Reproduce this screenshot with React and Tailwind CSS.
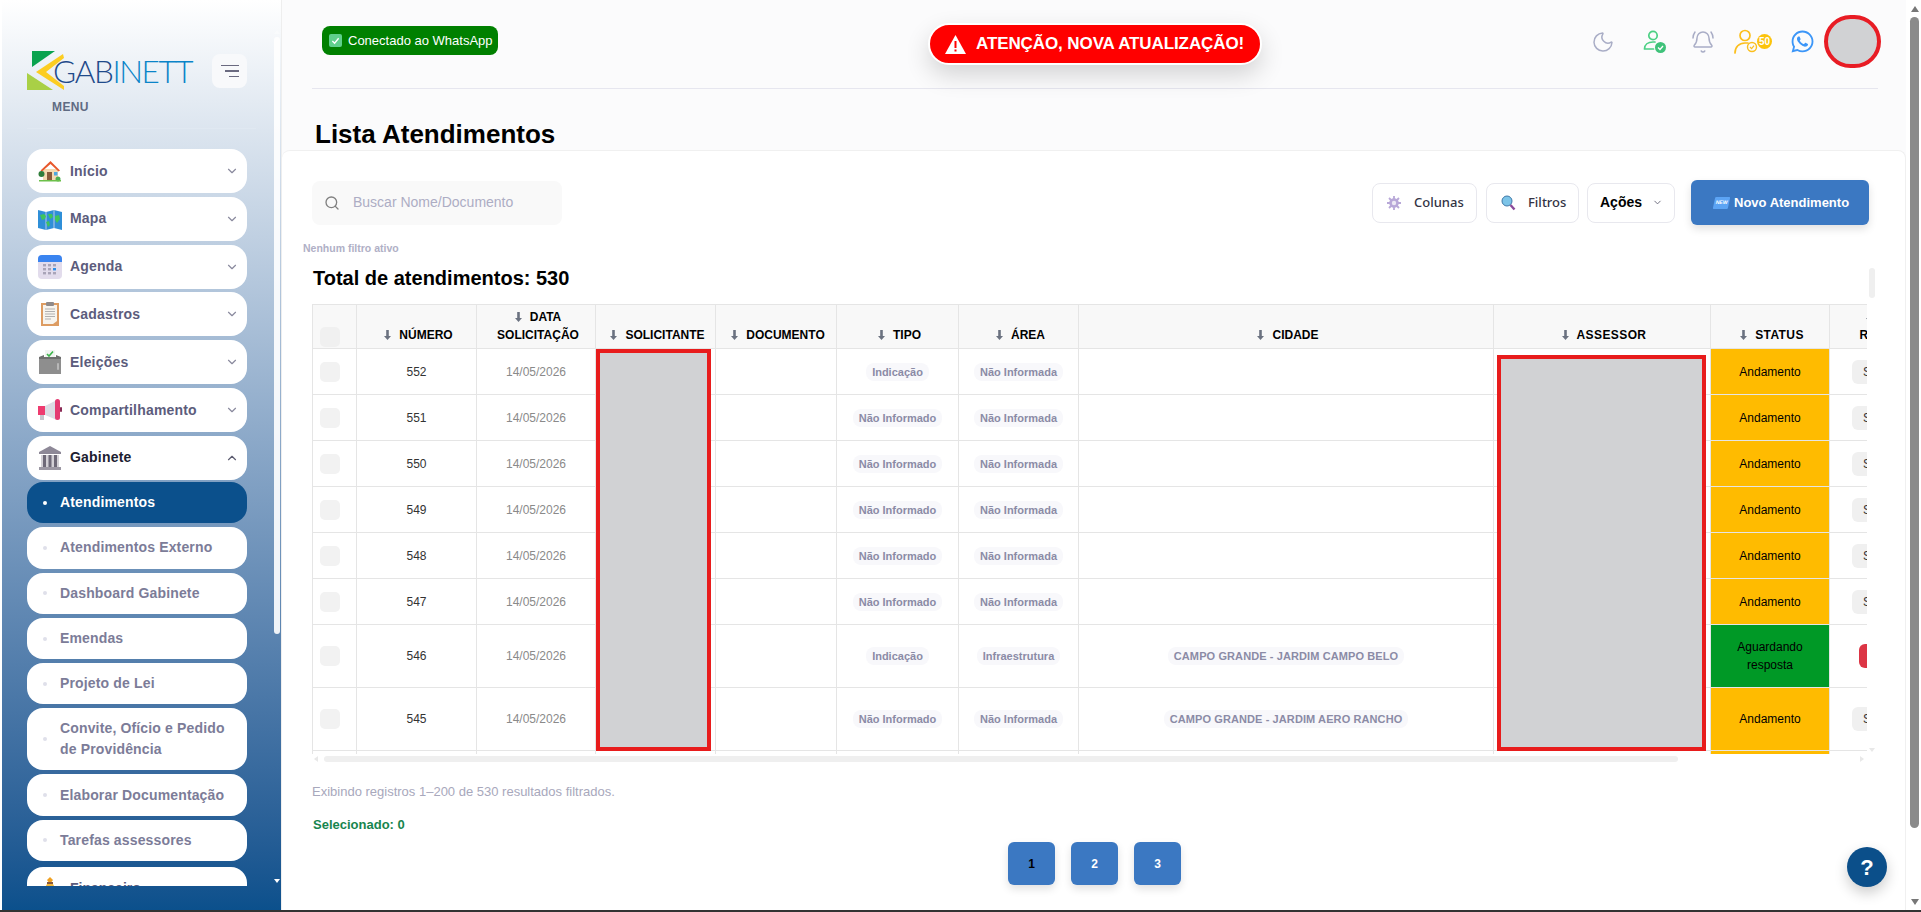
import { BellRing, ChevronDown, ChevronUp, Moon, Search } from "lucide-react";
import { FaWhatsapp } from "react-icons/fa";

const HouseIcon = () => (
  <svg width="24" height="24" viewBox="0 0 24 24">
    <rect x="5" y="10" width="15" height="11" fill="#f4d9b0" />
    <path d="M2.5 11.5 12.5 2l9.5 9.5-1.5 1-8-7.5-8.5 7.5z" fill="#e8582c" />
    <rect x="9" y="13" width="5" height="8" fill="#8a5a3a" />
    <rect x="16" y="13" width="3.5" height="3.5" fill="#4fa8e0" />
    <circle cx="3.5" cy="15" r="3" fill="#2f7d3a" />
    <circle cx="20" cy="20" r="2.5" fill="#4caf50" />
    <rect x="1" y="21" width="22" height="1.5" fill="#6cc04a" />
  </svg>
);
const MapIcon = () => (
  <svg width="24" height="24" viewBox="0 0 24 24">
    <path d="M0 3l8 2 8-2 8 2v18l-8-2-8 2-8-2z" fill="#2f8fd8" />
    <path d="M8 5v18M16 3v18" stroke="#b9c9e8" strokeWidth="1" />
    <path d="M2 8l4-1 2 2-1 3-3 1zM10 7l4 0 1 3-3 2zM17 9l4-1 1 4-3 4-2-3zM8 15l3-1 1 4-2 2z" fill="#3fc45c" />
  </svg>
);
const CalendarIcon = () => (
  <svg width="24" height="24" viewBox="0 0 24 24">
    <rect x="0" y="0" width="24" height="24" rx="4" fill="#e2dcec" />
    <path d="M0 7V4a4 4 0 0 1 4-4h16a4 4 0 0 1 4 4v3z" fill="#3a84f0" />
    <g fill="#a9a4b8">
      <rect x="5" y="9" width="3" height="2.4" />
      <rect x="10" y="9" width="3" height="2.4" />
      <rect x="15" y="9" width="3" height="2.4" />
      <rect x="5" y="13" width="3" height="2.4" />
      <rect x="10" y="13" width="3" height="2.4" />
      <rect x="5" y="17" width="3" height="2.4" />
      <rect x="10" y="17" width="3" height="2.4" />
      <rect x="15" y="17" width="3" height="2.4" />
    </g>
    <rect x="15" y="13" width="3" height="2.4" fill="#2f8fe8" />
  </svg>
);
const ClipboardIcon = () => (
  <svg width="24" height="24" viewBox="0 0 24 24">
    <rect x="3" y="1" width="18" height="23" fill="#dd9c62" />
    <path d="M5 3h14v16l-4 3H5z" fill="#f7f4ee" />
    <rect x="8" y="0" width="8" height="4" rx="1" fill="#8f8a8a" />
    <path d="M7 7h10M7 9.5h10M7 12h10M7 14.5h10M7 17h6" stroke="#a8a8a8" strokeWidth="0.9" />
  </svg>
);
const BallotIcon = () => (
  <svg width="24" height="24" viewBox="0 0 24 24">
    <rect x="7" y="0" width="10" height="8" fill="#f2f4f2" />
    <path d="M9 4l2 2 4-4.5" stroke="#3cb54a" strokeWidth="1.6" fill="none" />
    <path d="M1 7l5-2v2h12V5l5 2v2H1z" fill="#6e6e6e" />
    <rect x="1" y="9" width="22" height="15" fill="#8e8e8e" />
    <rect x="19" y="13" width="2" height="7" rx="1" fill="#b8b8b8" />
  </svg>
);
const MegaphoneIcon = () => (
  <svg width="24" height="24" viewBox="0 0 24 24">
    <rect x="2" y="15" width="4" height="7" fill="#c9c4cc" />
    <rect x="0" y="8" width="7" height="9" fill="#ee3b6f" />
    <path d="M7 8l12-6v20L7 17z" fill="#dcdce4" />
    <rect x="17" y="1" width="5" height="21" rx="2.5" fill="#e43a72" />
    <rect x="22" y="9" width="2" height="5" rx="1" fill="#8a2a55" />
  </svg>
);
const BankIcon = () => (
  <svg width="24" height="24" viewBox="0 0 24 24">
    <path d="M12 0 23 6v2H1V6z" fill="#8d8897" />
    <rect x="3" y="9" width="18" height="12" fill="#d3d0d6" />
    <path d="M5 9h3v12H5zM10.5 9h3v12h-3zM16 9h3v12h-3z" fill="#6e6978" />
    <rect x="1" y="21" width="22" height="3" fill="#9c98a4" />
  </svg>
);
const MoneyIcon = () => (
  <svg width="24" height="24" viewBox="0 0 24 24">
    <path d="M12 0l3 3-1.5 2h-3L9 3z" fill="#f0a020" />
    <rect x="9" y="5" width="6" height="2" fill="#8a5a3a" />
    <path d="M9 7h6l5 9v6H4v-6z" fill="#f5b73a" />
  </svg>
);
const SortArrow = () => (
  <svg width="7" height="10" viewBox="0 0 7 10" className="mr-[8px] inline-block align-[-1px]">
    <path d="M2.2 0h2.6v6H7L3.5 10 0 6h2.2z" fill="#6b7280" />
  </svg>
);

const mainMenu = [
  { label: "Início", icon: <HouseIcon /> },
  { label: "Mapa", icon: <MapIcon /> },
  { label: "Agenda", icon: <CalendarIcon /> },
  { label: "Cadastros", icon: <ClipboardIcon /> },
  { label: "Eleições", icon: <BallotIcon /> },
  { label: "Compartilhamento", icon: <MegaphoneIcon /> },
];

const subMenu = [
  "Atendimentos Externo",
  "Dashboard Gabinete",
  "Emendas",
  "Projeto de Lei",
  "Convite, Ofício e Pedido de Providência",
  "Elaborar Documentação",
  "Tarefas assessores",
];

const columns = [
  { title: "NÚMERO", width: "w-[120px]" },
  { title: "DATA SOLICITAÇÃO", width: "w-[119px]" },
  { title: "SOLICITANTE", width: "w-[120px]" },
  { title: "DOCUMENTO", width: "w-[121px]" },
  { title: "TIPO", width: "w-[122px]" },
  { title: "ÁREA", width: "w-[120px]" },
  { title: "CIDADE", width: "w-[415px]" },
  { title: "ASSESSOR", width: "w-[217px]", wide: true },
  { title: "STATUS", width: "w-[119px]", wide: true },
  { title: "DATA RETORNO", width: "w-[120px]", narrow: true },
];

const rows = [
  { num: 552, tipo: "Indicação", area: "Não Informada", cidade: "", status: "Andamento" },
  { num: 551, tipo: "Não Informado", area: "Não Informada", cidade: "", status: "Andamento" },
  { num: 550, tipo: "Não Informado", area: "Não Informada", cidade: "", status: "Andamento" },
  { num: 549, tipo: "Não Informado", area: "Não Informada", cidade: "", status: "Andamento" },
  { num: 548, tipo: "Não Informado", area: "Não Informada", cidade: "", status: "Andamento" },
  { num: 547, tipo: "Não Informado", area: "Não Informada", cidade: "", status: "Andamento" },
  { num: 546, tipo: "Indicação", area: "Infraestrutura", cidade: "CAMPO GRANDE - JARDIM CAMPO BELO", status: "Aguardando resposta", tall: true, late: true },
  { num: 545, tipo: "Não Informado", area: "Não Informada", cidade: "CAMPO GRANDE - JARDIM AERO RANCHO", status: "Andamento", tall: true },
  { num: 544, tipo: "Não Informado", area: "Não Informada", cidade: "", status: "Andamento" },
];

function Chip({ text, wide }) {
  return (
    <span className={`inline-block rounded-lg bg-[#f8f8fb] px-[6px] py-[2px] text-[11px] leading-[14px] font-bold text-[#8b8ba6] ${wide ? "tracking-[0.1px]" : ""}`}>
      {text}
    </span>
  );
}

function Sidebar() {
  return (
    <aside className="relative ml-[2px] h-full w-[279px] shrink-0 overflow-hidden bg-linear-to-b from-white to-[#0b508c]">
      <div className="flex h-[100px] items-start pl-[25px] pt-[51px]">
        <div className="relative flex h-[40px] w-[175px] items-center">
          <svg width="40" height="40" viewBox="0 0 40 40" className="absolute left-0 top-0">
            <path d="M5 0h23L5 16z" fill="#0aa34f" />
            <path d="M9 21 36 3l1 4-18 14 18 14 0 4z" fill="#fccd22" />
            <path d="M0 22l26 17H0z" fill="#a9d046" />
          </svg>
          <span className="ml-[26px] font-['Lato',sans-serif] text-[31.5px] leading-[40px] font-light tracking-[-1.4px] text-[#1f4a8a]">
            GAB<span className="text-[#0a84c8]">INETT</span>
          </span>
        </div>
        <button className="ml-[10px] mt-[3px] flex h-[34px] w-[35px] flex-col items-end justify-center gap-[4px] rounded-lg bg-[#f8f9fb] pr-[8px]">
          <span className="h-[1.5px] w-[18px] bg-[#6a6a80]" />
          <span className="h-[1.5px] w-[14px] bg-[#6a6a80]" />
          <span className="h-[1.5px] w-[10px] bg-[#6a6a80]" />
        </button>
      </div>
      <div className="pl-[50px] text-[12px] leading-[14px] font-bold tracking-[0.4px] text-[#5f6b82]">MENU</div>
      <div className="mx-[25px] mt-[14px] h-px bg-white/10" />

      <nav className="ml-[25px] mt-[20px] flex h-[737px] w-[220px] flex-col gap-[3.83px] overflow-hidden">
        {mainMenu.map((item) => (
          <a key={item.label} className="flex h-[44px] shrink-0 items-center rounded-2xl bg-white pl-[11px] pr-[8px]">
            {item.icon}
            <span className="ml-[8px] flex-1 text-[14px] font-bold tracking-[0.2px] text-[#5c5c7c]">{item.label}</span>
            <ChevronDown size={14} className="text-[#8a8a9e]" />
          </a>
        ))}
        <a className="flex h-[44px] shrink-0 items-center rounded-2xl bg-white pl-[11px] pr-[8px]">
          <BankIcon />
          <span className="ml-[8px] flex-1 text-[14px] font-bold tracking-[0.2px] text-[#1c2030]">Gabinete</span>
          <ChevronUp size={14} className="text-[#5c5c70]" />
        </a>

        <div className="-mt-[1.8px] flex shrink-0 flex-col gap-[4px]">
          <a className="flex h-[41.3px] items-center rounded-2xl bg-[#0b508c] pl-[16px]">
            <span className="h-[4px] w-[4px] rounded-full bg-white" />
            <span className="ml-[13px] text-[14px] font-bold tracking-[0.15px] text-white">Atendimentos</span>
          </a>
          {subMenu.map((label) => (
            <a key={label} className={`flex items-center rounded-2xl bg-white pl-[16px] pr-[8px] ${label.startsWith("Convite") ? "h-[62px]" : "h-[41.3px]"}`}>
              <span className="h-[4px] w-[4px] shrink-0 rounded-full bg-[#dfe0ea]" />
              <span className="ml-[13px] text-[14px] leading-[21px] font-bold tracking-[0.15px] text-[#7c7c98]">{label}</span>
            </a>
          ))}
        </div>

        <a className="mt-[2px] flex h-[44px] shrink-0 items-center rounded-2xl bg-white pl-[11px] pr-[8px]">
          <MoneyIcon />
          <span className="ml-[8px] flex-1 text-[14px] font-bold text-[#5c5c7c]">Financeiro</span>
          <ChevronDown size={14} className="text-[#8a8a9e]" />
        </a>
      </nav>

      {/* scrollbar do menu */}
      <div className="absolute right-[1px] top-[37px] h-[597px] w-[6px] rounded-full bg-white/90" />
      <div className="absolute right-[1px] top-[30px] h-0 w-0 border-x-[3px] border-b-[4px] border-x-transparent border-b-white/40" />
      <div className="absolute right-[1px] top-[879px] h-0 w-0 border-x-[3px] border-t-[4px] border-x-transparent border-t-white" />
    </aside>
  );
}

function TopIcons() {
  return (
    <div className="ml-auto flex items-center">
      <Moon size={24} strokeWidth={1.5} className="text-[#a9adc6]" />
      <svg width="24" height="26" viewBox="0 0 24 26" fill="none" className="ml-[28px] text-[#4cd084]">
        <circle cx="10" cy="6.5" r="4.2" stroke="currentColor" strokeWidth="1.7" />
        <path d="M1.5 20c0-4.5 3.5-7 8.5-7h2M1.5 20h9" stroke="currentColor" strokeWidth="1.7" strokeLinecap="round" />
        <circle cx="17.5" cy="18.5" r="5.5" fill="#3fc27a" />
        <path d="M15 18.5l2 2 3-3.5" stroke="#fff" strokeWidth="1.3" />
      </svg>
      <BellRing size={24} strokeWidth={1.5} className="ml-[24px] text-[#a9adc6]" />
      <div className="ml-[19px] flex items-center">
        <svg width="26" height="26" viewBox="0 0 26 26" fill="none" className="text-[#fbbf1d]">
          <circle cx="11" cy="6.5" r="5" stroke="currentColor" strokeWidth="1.7" />
          <path d="M1 24c0-6 4-10 10-10h3" stroke="currentColor" strokeWidth="1.7" strokeLinecap="round" />
          <circle cx="18" cy="18" r="4.5" stroke="currentColor" strokeWidth="1.4" />
          <path d="M16 18l1.6 1.6 2.4-3" stroke="currentColor" strokeWidth="1.2" />
        </svg>
        <span className="-ml-[3px] flex h-[15px] w-[15px] items-center justify-center rounded-full bg-[#fcc30b] text-[10px] font-bold text-white">50</span>
      </div>
      <FaWhatsapp size={25} className="ml-[18px] text-[#3c96f8]" />
      <div className="ml-[9px] h-[53px] w-[57px] rounded-full border-4 border-[#e81c24] bg-[#d1d2d4]" />
    </div>
  );
}

function Header() {
  return (
    <header className="ml-[30px] flex h-[89px] w-[1566px] items-start border-b border-[#e6e6ef] pt-[16px]">
      <div className="ml-[10px] mt-[10px] flex h-[29px] w-[176px] items-center rounded-lg bg-[#008000] pl-[7px]">
        <span className="flex h-[13px] w-[13px] items-center justify-center rounded-[2px] bg-[#5fd08c]">
          <svg width="9" height="9" viewBox="0 0 10 10" fill="none"><path d="M1.5 5.5l2.5 2.5 4.5-5.5" stroke="#fff" strokeWidth="1.5" /></svg>
        </span>
        <span className="ml-[6px] text-[13px] whitespace-nowrap text-white">Conectado ao WhatsApp</span>
      </div>
      <div className="ml-[430px] mt-[7px] flex h-[42px] w-[334px] items-center rounded-full border-2 border-white bg-[#ff0000] pl-[15px] shadow-[0_10px_24px_rgba(0,0,0,0.16)]">
        <svg width="21" height="19" viewBox="0 0 21 19"><path d="M10.5 0 21 19H0z" fill="#fff" /><rect x="9.5" y="6" width="2" height="7" fill="#f00" /><rect x="9.5" y="14.5" width="2" height="2" fill="#f00" /></svg>
        <span className="ml-[10px] text-[17px] font-bold tracking-[-0.1px] whitespace-nowrap text-white">ATENÇÃO, NOVA ATUALIZAÇÃO!</span>
      </div>
      <div className="-mr-[3px] -mt-[1px] ml-auto flex">
        <TopIcons />
      </div>
    </header>
  );
}

function Toolbar() {
  return (
    <div className="flex h-[45px] items-center pr-[36px]">
      <div className="flex h-[44px] w-[250px] items-center rounded-lg bg-[#f9f9f9] pl-[12px]">
        <Search size={16} className="text-[#808080]" />
        <span className="ml-[13px] text-[14px] text-[#adadc4]">Buscar Nome/Documento</span>
      </div>
      <button className="ml-auto flex h-[40px] w-[105px] items-center rounded-lg border border-[#e8e8ee] bg-white pl-[14px]">
        <svg width="14" height="14" viewBox="0 0 14 14"><path d="M7 0v14M0 7h14M2 2l10 10M12 2 2 12" stroke="#b8a8d8" strokeWidth="1.8" /><circle cx="7" cy="7" r="4.8" fill="#b8a8d8" /><circle cx="7" cy="7" r="2.2" fill="#ece8f4" /></svg>
        <span className="ml-[13px] font-['Noto_Sans',sans-serif] text-[13px] font-medium text-[#333344]">Colunas</span>
      </button>
      <button className="ml-[9px] flex h-[40px] w-[93px] items-center rounded-lg border border-[#e8e8ee] bg-white pl-[14px]">
        <svg width="15" height="16" viewBox="0 0 15 16"><circle cx="6" cy="6" r="5" fill="#7cc4e8" stroke="#3f78a8" /><path d="M9.5 10l4 4.5" stroke="#8a4a9a" strokeWidth="2.4" /></svg>
        <span className="ml-[12px] font-['Noto_Sans',sans-serif] text-[13px] font-medium text-[#333344]">Filtros</span>
      </button>
      <button className="ml-[8px] flex h-[40px] w-[88px] items-center rounded-lg border border-[#e8e8ee] bg-white pl-[12px]">
        <span className="text-[14px] font-bold text-black">Ações</span>
        <ChevronDown size={11} className="ml-[10px] text-[#666677]" />
      </button>
      <button className="ml-[16px] flex h-[45px] w-[178px] items-center rounded-md bg-[#3b78c2] pl-[23px] shadow-[0_4px_8px_rgba(0,0,0,0.12)]">
        <span className="flex h-[12px] w-[15px] -skew-x-12 items-center justify-center rounded-[1px] bg-[#5ca4f4] text-[5px] font-bold text-white">NEW</span>
        <span className="ml-[5px] text-[13px] font-bold text-white">Novo Atendimento</span>
      </button>
    </div>
  );
}

function AttendanceTable() {
  return (
    <div className="relative h-[450px] w-[1555px] overflow-hidden">
      <table className="w-[1637px] table-fixed border-collapse text-center text-[12px] text-[#333333]">
        <colgroup>
          <col className="w-[44px]" />
          {columns.map((c) => (
            <col key={c.title} className={c.width} />
          ))}
        </colgroup>
        <thead>
          <tr className="h-[44px] bg-[#f8f8f8]">
            <th className="border border-[#e5e5e5] px-[7px] pt-[20px]">
              <div className="h-[20px] w-[20px] rounded-[5px] bg-[#f0f0f0]" />
            </th>
            {columns.map((c) => (
              <th key={c.title} className={`border border-[#e5e5e5] pb-[4px] align-bottom text-[12px] leading-[18px] font-bold text-black ${c.wide ? "tracking-[0.4px]" : ""} ${c.narrow ? "px-[10px]" : "pl-[6px] pr-[2px]"}`}>
                <SortArrow />
                {c.title}
              </th>
            ))}
          </tr>
        </thead>
        <tbody>
          {rows.map((r) => (
            <tr key={r.num} className={r.tall ? "h-[63px]" : "h-[46px]"}>
              <td className="border border-[#e5e5e5] px-[7px]">
                <div className="h-[20px] w-[20px] rounded-[5px] bg-[#f2f2f2]" />
              </td>
              <td className="border border-[#e5e5e5]">{r.num}</td>
              <td className="border border-[#e5e5e5] text-[#8a8a8a]">14/05/2026</td>
              <td className="border border-[#e5e5e5]" />
              <td className="border border-[#e5e5e5]" />
              <td className="border border-[#e5e5e5]"><Chip text={r.tipo} /></td>
              <td className="border border-[#e5e5e5]"><Chip text={r.area} /></td>
              <td className="border border-[#e5e5e5]">{r.cidade && <Chip text={r.cidade} wide />}</td>
              <td className="border border-[#e5e5e5]" />
              <td className={`border border-[#e5e5e5] px-[20px] leading-[18px] text-black ${r.late ? "bg-[#009926]" : "bg-[#ffbb00]"}`}>{r.status}</td>
              <td className="border border-[#e5e5e5] text-left">
                {r.late ? (
                  <span className="ml-[29px] inline-block rounded-md bg-[#dc3545] px-[8px] py-[3px] whitespace-nowrap text-white">Atrasado</span>
                ) : (
                  <span className="ml-[22px] inline-block rounded-md bg-[#f0f0f0] px-[11px] py-[3px] font-medium whitespace-nowrap text-[#333333]">Sem retorno</span>
                )}
              </td>
            </tr>
          ))}
        </tbody>
      </table>

      {/* dados ocultados na captura */}
      <div className="absolute left-[284px] top-[45px] h-[402px] w-[115px] border-4 border-[#e81c1c] bg-[#d1d2d4]" />
      <div className="absolute left-[1185px] top-[51px] h-[396px] w-[209px] border-4 border-[#e81c1c] bg-[#d1d2d4]" />
    </div>
  );
}

function Content() {
  return (
    <section className="relative h-[760px] w-[1624px] rounded-t-lg border-t border-r border-[#f0f0f0] bg-white pl-[30px] pt-[29px]">
      <Toolbar />
      <div className="-ml-[9px] mt-[16px] h-[14px] text-[10.5px] leading-[14px] font-bold text-[#b0b0c6]">Nenhum filtro ativo</div>
      <div className="ml-[1px] mt-[9px] h-[28px] text-[20px] leading-[28px] font-bold text-black">Total de atendimentos: 530</div>
      <div className="mt-[12px]">
        <AttendanceTable />
      </div>

      {/* scrollbar horizontal da tabela */}
      <div className="relative mt-[2px] h-[6px] w-[1555px]">
        <div className="absolute left-[12px] h-[6px] w-[1354px] rounded-full bg-[#efefef]" />
        <div className="absolute left-[2px] top-0 h-0 w-0 border-y-[3px] border-r-[4px] border-y-transparent border-r-[#e8e8e8]" />
        <div className="absolute right-[3px] top-0 h-0 w-0 border-y-[3px] border-l-[4px] border-y-transparent border-l-[#e8e8e8]" />
      </div>

      <div className="mt-[22px] h-[16px] text-[13px] leading-[16px] text-[#a8a8bc]">Exibindo registros 1–200 de 530 resultados filtrados.</div>
      <div className="ml-[1px] mt-[17px] h-[16px] text-[13px] leading-[16px] font-bold text-[#17854e]">Selecionado: 0</div>
      <div className="ml-[696px] mt-[9px] flex gap-[16px]">
        {[1, 2, 3].map((n) => (
          <button key={n} className={`h-[43px] w-[47px] rounded-md bg-[#3b78c2] text-[12px] font-bold shadow-[0_4px_8px_rgba(0,0,0,0.12)] ${n === 1 ? "text-black" : "text-white"}`}>
            {n}
          </button>
        ))}
      </div>

      {/* scrollbar vertical da tabela */}
      <div className="absolute left-[1587px] top-[117px] h-[30px] w-[6px] rounded-sm bg-[#efefef]" />
      <div className="absolute left-[1587px] top-[597px] h-0 w-0 border-x-[3px] border-t-[4px] border-x-transparent border-t-[#e8e8e8]" />

      <button className="absolute left-[1565px] top-[696px] flex h-[40px] w-[40px] items-center justify-center rounded-full bg-[#0b4f8a] text-[22px] font-bold text-white shadow-[0_6px_14px_rgba(0,0,0,0.2)]">
        ?
      </button>
    </section>
  );
}

export default function App() {
  return (
    <div className="flex h-[912px] w-full overflow-hidden border-b-2 border-[#333333] bg-white font-['Liberation_Sans',Arial,sans-serif]">
      <Sidebar />
      <main className="relative flex-1 overflow-hidden border-l border-[#eeeeee] bg-[#fbfbfc]">
        <div className="h-[150px] w-[1624px]">
          <Header />
          <h1 className="ml-[33px] mt-[30px] text-[26px] leading-[30px] font-bold text-black">Lista Atendimentos</h1>
        </div>
        <Content />
        {/* scrollbar da pagina */}
        <div className="absolute right-0 top-0 h-full w-[15px] bg-white" />
        <div className="absolute right-[2px] top-[17px] h-[811px] w-[9px] rounded-full bg-[#8a8a8a]" />
        <div className="absolute right-[2px] top-[6px] h-0 w-0 border-x-[4px] border-b-[6px] border-x-transparent border-b-[#777777]" />
        <div className="absolute right-[2px] top-[899px] h-0 w-0 border-x-[4px] border-t-[6px] border-x-transparent border-t-[#777777]" />
      </main>
    </div>
  );
}
